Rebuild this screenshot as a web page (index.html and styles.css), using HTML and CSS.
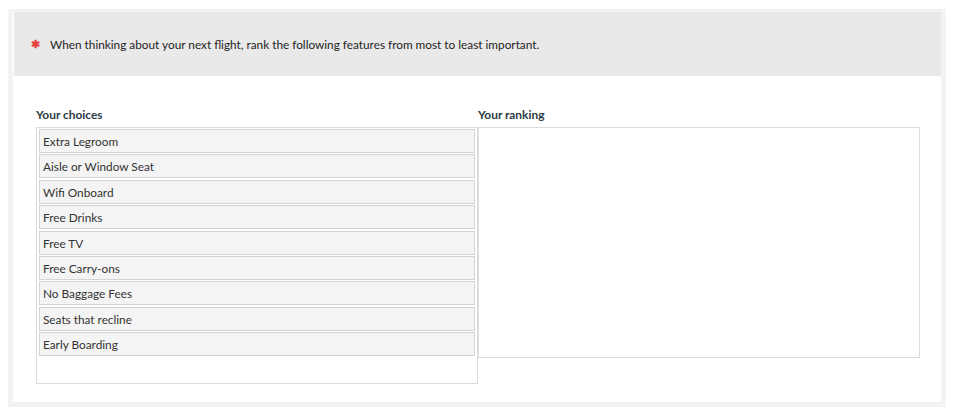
FILE: index.html
```html
<!DOCTYPE html>
<html lang="en">
<head>
    <meta charset="UTF-8">
    <meta name="viewport" content="width=device-width, initial-scale=1.0">
    <title>Rank Order Question</title>
    <link rel="stylesheet" href="styles.css">
</head>
<body>
    <div class="question-frame">
        <div class="question-card">
            <div class="question-header">
                <span class="required">&#x2731;</span>
                <span class="question-text">When thinking about your next flight, rank the following features from most to least important.</span>
            </div>

            <div class="rank-area">
                <div class="rank-column">
                    <div class="column-label">Your choices</div>
                    <ul class="choice-list choices">
                        <li class="choice-item">Extra Legroom</li>
                        <li class="choice-item">Aisle or Window Seat</li>
                        <li class="choice-item">Wifi Onboard</li>
                        <li class="choice-item">Free Drinks</li>
                        <li class="choice-item">Free TV</li>
                        <li class="choice-item">Free Carry-ons</li>
                        <li class="choice-item">No Baggage Fees</li>
                        <li class="choice-item">Seats that recline</li>
                        <li class="choice-item">Early Boarding</li>
                    </ul>
                </div>
                <div class="rank-column">
                    <div class="column-label">Your ranking</div>
                    <ul class="choice-list ranking"></ul>
                </div>
            </div>
        </div>
    </div>
</body>
</html>
```

FILE: styles.css
```css
body {
    font-family: Lato, "Open Sans", Arial, sans-serif;
    margin: 0;
    padding: 9px 8px;
    background-color: #ffffff;
    color: #2d3b45;
}

.question-frame {
    width: 938px;
    box-sizing: border-box;
    border: 5px solid #f3f3f3;
    border-top-width: 3px;
}

.question-card {
    background: #ffffff;
    padding-bottom: 18px;
}

.question-header {
    background: #e9e9e9;
    height: 64px;
    display: flex;
    align-items: center;
    padding-left: 17px;
    margin-left: 1px;
    font-size: 11.8px;
    color: #1e1e1e;
}

.required {
    color: #e5413c;
    font-size: 11px;
    margin-right: 10px;
    font-weight: bold;
}

.rank-area {
    display: flex;
    padding: 31px 21px 0 23px;
}

.rank-column {
    width: 442px;
}

.column-label {
    font-size: 11.9px;
    font-weight: bold;
    color: #2d3b45;
    height: 14px;
    margin-bottom: 6px;
}

.choice-list {
    list-style: none;
    margin: 0;
    border: 1px solid #dcdcdc;
    box-sizing: border-box;
}

.choices {
    padding: 1px 2px 25px 2px;
}

.ranking {
    height: 231px;
    padding: 0;
}

.choice-item {
    height: 24px;
    box-sizing: border-box;
    line-height: 23px;
    padding: 0 3px;
    margin-bottom: 1.4px;
    background: #f4f4f4;
    border: 1px solid #d4d4d4;
    font-size: 11.8px;
    color: #333;
}
```
